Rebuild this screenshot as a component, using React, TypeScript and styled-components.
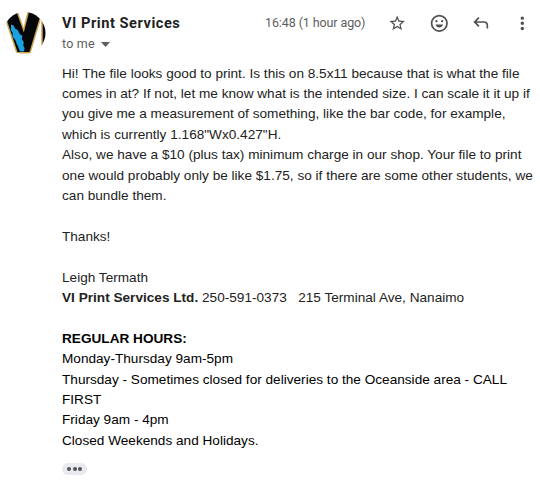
import React from "react";
import styled, { createGlobalStyle } from "styled-components";

const GlobalStyle = createGlobalStyle`
  body {
    margin: 0;
    background: #fff;
    font-family: "Liberation Sans", Arial, sans-serif;
  }
`;

const Message = styled.article`
  display: grid;
  grid-template-columns: 62px 1fr;
  width: 540px;
  height: 486px;
  overflow: hidden;
  background: #fff;
`;

const Avatar = styled.svg`
  display: block;
  width: 44px;
  height: 44px;
  margin: 11px 0 0 3px;
`;

const Main = styled.div`
  display: flex;
  flex-direction: column;
  align-items: flex-start;
`;

const Header = styled.header`
  display: flex;
  justify-content: space-between;
  width: 481px;
  height: 63.6px;
`;

const Sender = styled.div`
  padding-top: 13px;
`;

const Name = styled.h1`
  margin: 0;
  font: 700 14.6px/21px Roboto, sans-serif;
  letter-spacing: 0.53px;
  color: #1f1f1f;
  white-space: nowrap;
`;

const Recipient = styled.div`
  display: flex;
  align-items: center;
  gap: 6px;
  font: 400 12.5px/20px Roboto, sans-serif;
  letter-spacing: 0.2px;
  color: #5e5e5e;
`;

const Caret = styled.svg`
  display: block;
  width: 9px;
  height: 5px;
  fill: #5e5e5e;
`;

const Meta = styled.div`
  display: flex;
  align-items: center;
  height: 46px;
`;

const Time = styled.time`
  width: 111px;
  font: 400 12.5px/20px Roboto, sans-serif;
  letter-spacing: -0.1px;
  color: #5e5e5e;
  white-space: nowrap;
`;

const IconButton = styled.button<{ $width: number }>`
  display: flex;
  align-items: center;
  justify-content: center;
  width: ${(p) => p.$width}px;
  height: 42px;
  padding: 0;
  border: 0;
  background: none;
  color: #505050;
`;

const Glyph = styled.svg<{ $size: number }>`
  display: block;
  width: ${(p) => p.$size}px;
  height: ${(p) => p.$size}px;
  fill: currentColor;
`;

const Body = styled.div`
  font-size: 13.6px;
  line-height: 20.4px;
  color: #222;
  white-space: nowrap;
`;

const Paragraph = styled.p<{ $gap?: boolean }>`
  margin: 0 0 ${(p) => (p.$gap ? "20.4px" : "0")};
`;

const Line = styled.span`
  display: block;
  letter-spacing: 0.01px;
  white-space: pre;
`;

const Hours = styled.section`
  color: #000;
`;

const More = styled.button`
  display: flex;
  align-items: center;
  justify-content: center;
  gap: 1.5px;
  width: 25px;
  height: 12px;
  margin-top: 11.4px;
  padding: 0;
  border: 0;
  border-radius: 6px;
  background: #e8eaed;
`;

const Dot = styled.i`
  width: 4px;
  height: 4px;
  border-radius: 50%;
  background: #505357;
`;

const ACTIONS = [
  {
    label: "Star",
    width: 42,
    size: 18.4,
    path: "M22 9.24l-7.19-.62L12 2 9.19 8.63 2 9.24l5.46 4.73L5.82 21 12 17.27 18.18 21l-1.63-7.03L22 9.24zM12 15.4l-3.76 2.27 1-4.28-3.32-2.88 4.38-.38L12 6.1l1.71 4.04 4.38.38-3.32 2.88 1 4.28L12 15.4z",
  },
  {
    label: "Add reaction",
    width: 42,
    size: 20.6,
    path: "M12 2a10 10 0 1 0 0 20 10 10 0 0 0 0-20zm0 18a8 8 0 1 1 0-16 8 8 0 0 1 0 16zM8.7 10.8A1.3 1.3 0 1 0 8.7 8.2a1.3 1.3 0 0 0 0 2.6zm6.6 0a1.3 1.3 0 1 0 0-2.6 1.3 1.3 0 0 0 0 2.6zM7.6 13.400h8.800c-.6 2.100-2.300 3.500-4.400 3.500s-3.800-1.400-4.400-3.500z",
  },
  {
    label: "Reply",
    width: 42,
    size: 19.6,
    path: "M19 19v-4c0-.83-.29-1.540-.88-2.130A2.900 2.900 0 0 0 16 12H6.830l3.600 3.600L9 17l-6-6 6-6 1.430 1.400L6.830 10H16c1.380 0 2.560.490 3.540 1.460A4.820 4.820 0 0 1 21 15v4z",
  },
  {
    label: "More",
    width: 41,
    size: 20.6,
    path: "M12 4a2 2 0 1 0 0 4 2 2 0 0 0 0-4zm0 6a2 2 0 1 0 0 4 2 2 0 0 0 0-4zm0 6a2 2 0 1 0 0 4 2 2 0 0 0 0-4z",
  },
];

function SenderAvatar() {
  return (
    <Avatar viewBox="0 0 44 44" role="img" aria-label="VI Print Services">
      <defs>
        <clipPath id="disc">
          <circle cx="21.500" cy="22" r="21" />
        </clipPath>
      </defs>
      <circle cx="21.500" cy="22" r="21" fill="#fff" stroke="#eceef2" strokeWidth=".6" />
      <g clipPath="url(#disc)" stroke="#cda550" strokeWidth="1.500">
        <path d="M0 0H14L20.700 19 25.500 0H39.500L27 41.800H14z" fill="#050608" />
        <path d="M39 0H47V46H39z" fill="#050608" />
        <path
          d="M8 13.500l2.600 1 1.600 3.200 2.500 1.200 2 4.100 2.700 2.100-.6 3.200 2 3-.6 3.200 1.400 2.400-.7 3.500h-4l-1.600-4.300-1.500-3.200-1.500-3.800-2.900-3.600.3-3.400-1.900-3.100z"
          fill="#18a2e2"
          stroke="none"
        />
      </g>
    </Avatar>
  );
}

export default function App() {
  return (
    <>
      <GlobalStyle />
      <Message>
        <SenderAvatar />
        <Main>
          <Header>
            <Sender>
              <Name>VI Print Services</Name>
              <Recipient>
                to me
                <Caret viewBox="0 0 9 5">
                  <path d="M0 0h9L4.500 5z" />
                </Caret>
              </Recipient>
            </Sender>
            <Meta>
              <Time>16:48 (1 hour ago)</Time>
              {ACTIONS.map((a) => (
                <IconButton key={a.label} $width={a.width} aria-label={a.label}>
                  <Glyph viewBox="0 0 24 24" $size={a.size}>
                    <path d={a.path} />
                  </Glyph>
                </IconButton>
              ))}
            </Meta>
          </Header>
          <Body>
            <Paragraph $gap>
              <Line>Hi! The file looks good to print. Is this on 8.5x11 because that is what the file</Line>
              <Line>comes in at? If not, let me know what is the intended size. I can scale it it up if</Line>
              <Line>you give me a measurement of something, like the bar code, for example,</Line>
              <Line>which is currently 1.168"Wx0.427"H.</Line>
              <Line>Also, we have a $10 (plus tax) minimum charge in our shop. Your file to print</Line>
              <Line>one would probably only be like $1.75, so if there are some other students, we</Line>
              <Line>can bundle them.</Line>
            </Paragraph>
            <Paragraph $gap>Thanks!</Paragraph>
            <Paragraph $gap>
              <Line>Leigh Termath</Line>
              <Line>
                <b>VI Print Services Ltd.</b>
                {" 250-591-0373 \u00a0 215 Terminal Ave, Nanaimo"}
              </Line>
            </Paragraph>
            <Hours>
              <Line>
                <b>REGULAR HOURS:</b>
              </Line>
              <Line>Monday-Thursday 9am-5pm</Line>
              <Line>Thursday - Sometimes closed for deliveries to the Oceanside area - CALL</Line>
              <Line>FIRST</Line>
              <Line>Friday 9am - 4pm</Line>
              <Line>Closed Weekends and Holidays.</Line>
            </Hours>
          </Body>
          <More aria-label="Show trimmed content">
            <Dot />
            <Dot />
            <Dot />
          </More>
        </Main>
      </Message>
    </>
  );
}
